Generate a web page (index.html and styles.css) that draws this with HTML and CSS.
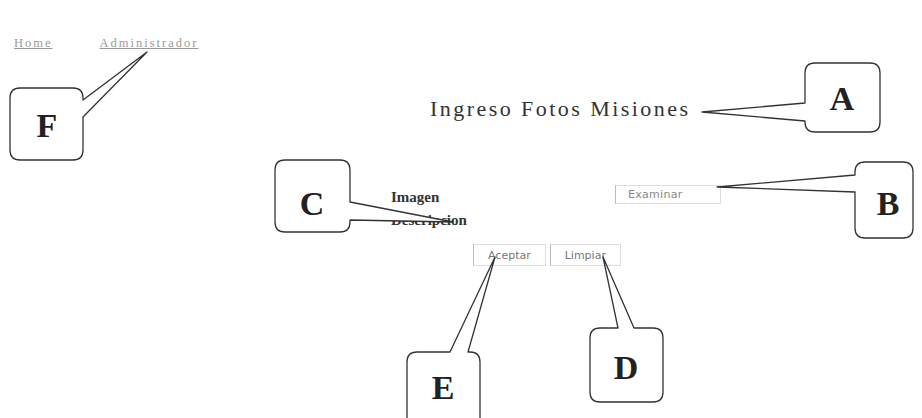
FILE: index.html
```html
<!DOCTYPE html>
<html lang="es">
<head>
    <meta charset="UTF-8">
    <meta name="viewport" content="width=device-width, initial-scale=1.0">
    <title>Ingreso Fotos Misiones</title>
    <link rel="stylesheet" href="styles.css">
</head>
<body>
    <nav class="menu">
        <a href="#">Home</a>
        <a href="#">Administrador</a>
    </nav>

    <main class="content">
        <h1 class="title">Ingreso Fotos Misiones</h1>

        <form class="photo-form">
            <div class="field">
                <label>Imagen</label>
                <span class="file-btn">Examinar</span>
            </div>
            <div class="field">
                <label>Descripcion</label>
            </div>
            <div class="actions">
                <button type="button">Aceptar</button>
                <button type="button">Limpiar</button>
            </div>
        </form>
    </main>

    <!-- callouts over the screen capture -->
    <svg class="callouts" width="922" height="418" viewBox="0 0 922 418">
        <g fill="#fff" stroke="#333" stroke-width="1.3" stroke-linejoin="round">
            <!-- F -->
            <path d="M20 88 H73 Q83 88 83 98 V100 L147 52 L83 117 V150 Q83 160 73 160 H20 Q10 160 10 150 V98 Q10 88 20 88 Z"/>
            <!-- A -->
            <path d="M815 63 H870 Q880 63 880 73 V122 Q880 132 870 132 H815 Q805 132 805 122 V121 L702 112 L805 103 V73 Q805 63 815 63 Z"/>
            <!-- C -->
            <path d="M285 160 H340 Q350 160 350 170 V202 L453 222 L350 220 V222 Q350 232 340 232 H285 Q275 232 275 222 V170 Q275 160 285 160 Z"/>
            <!-- B -->
            <path d="M865 162 H903 Q913 162 913 172 V228 Q913 238 903 238 H865 Q855 238 855 228 V192 L717 187 L855 175 V172 Q855 162 865 162 Z"/>
            <!-- E -->
            <path d="M417 352 H450 L495 257 L468 352 H470 Q480 352 480 362 V430 H407 V362 Q407 352 417 352 Z"/>
            <!-- D -->
            <path d="M600 328 H618 L603 257 L634 328 H653 Q663 328 663 338 V392 Q663 402 653 402 H600 Q590 402 590 392 V338 Q590 328 600 328 Z"/>
        </g>
        <g class="letters" text-anchor="middle">
            <text x="47" y="137">F</text>
            <text x="842" y="110">A</text>
            <text x="312" y="215">C</text>
            <text x="888" y="215">B</text>
            <text x="443" y="399">E</text>
            <text x="626" y="379">D</text>
        </g>
    </svg>
</body>
</html>
```

FILE: styles.css
```css
body {
    margin: 0;
    width: 922px;
    height: 418px;
    position: relative;
    overflow: hidden;
    background-color: #fff;
    color: #333;
    font-family: "Liberation Serif", "Times New Roman", serif;
}

.menu {
    padding: 36px 0 0 14px;
    display: flex;
    gap: 47px;
    font-size: 12.5px;
    letter-spacing: 2px;
}

.menu a {
    color: #999;
    text-decoration: underline;
}

.content {
    margin-left: 391px;
    width: 344px;
}

.title {
    margin: 45px 0 0 39px;
    font-size: 22px;
    font-weight: normal;
    letter-spacing: 2.45px;
    color: #333;
}

.photo-form {
    margin-top: 64px;
}

.field {
    display: flex;
    align-items: center;
    height: 23px;
}

.field label {
    width: 224px;
    font-size: 15px;
    font-weight: bold;
    color: #333;
}

.file-btn {
    width: 92px;
    height: 17px;
    padding-left: 12px;
    border: 1px solid #ddd;
    border-left-color: #bbb;
    font-family: "DejaVu Sans", sans-serif;
    font-size: 11px;
    letter-spacing: 0.3px;
    line-height: 17px;
    color: #888;
    margin-top: -7px;
}

.actions {
    display: flex;
    gap: 4px;
    margin: 12px 0 0 82px;
}

.actions button {
    height: 22px;
    padding: 0 14px;
    background: #fff;
    border: 1px solid #ddd;
    border-left-color: #bbb;
    font-family: "DejaVu Sans", sans-serif;
    font-size: 11px;
    color: #777;
}

.callouts {
    position: absolute;
    left: 0;
    top: 0;
}

.letters {
    font-family: "Liberation Serif", "Times New Roman", serif;
    font-size: 34px;
    font-weight: bold;
    fill: #222;
}
```
